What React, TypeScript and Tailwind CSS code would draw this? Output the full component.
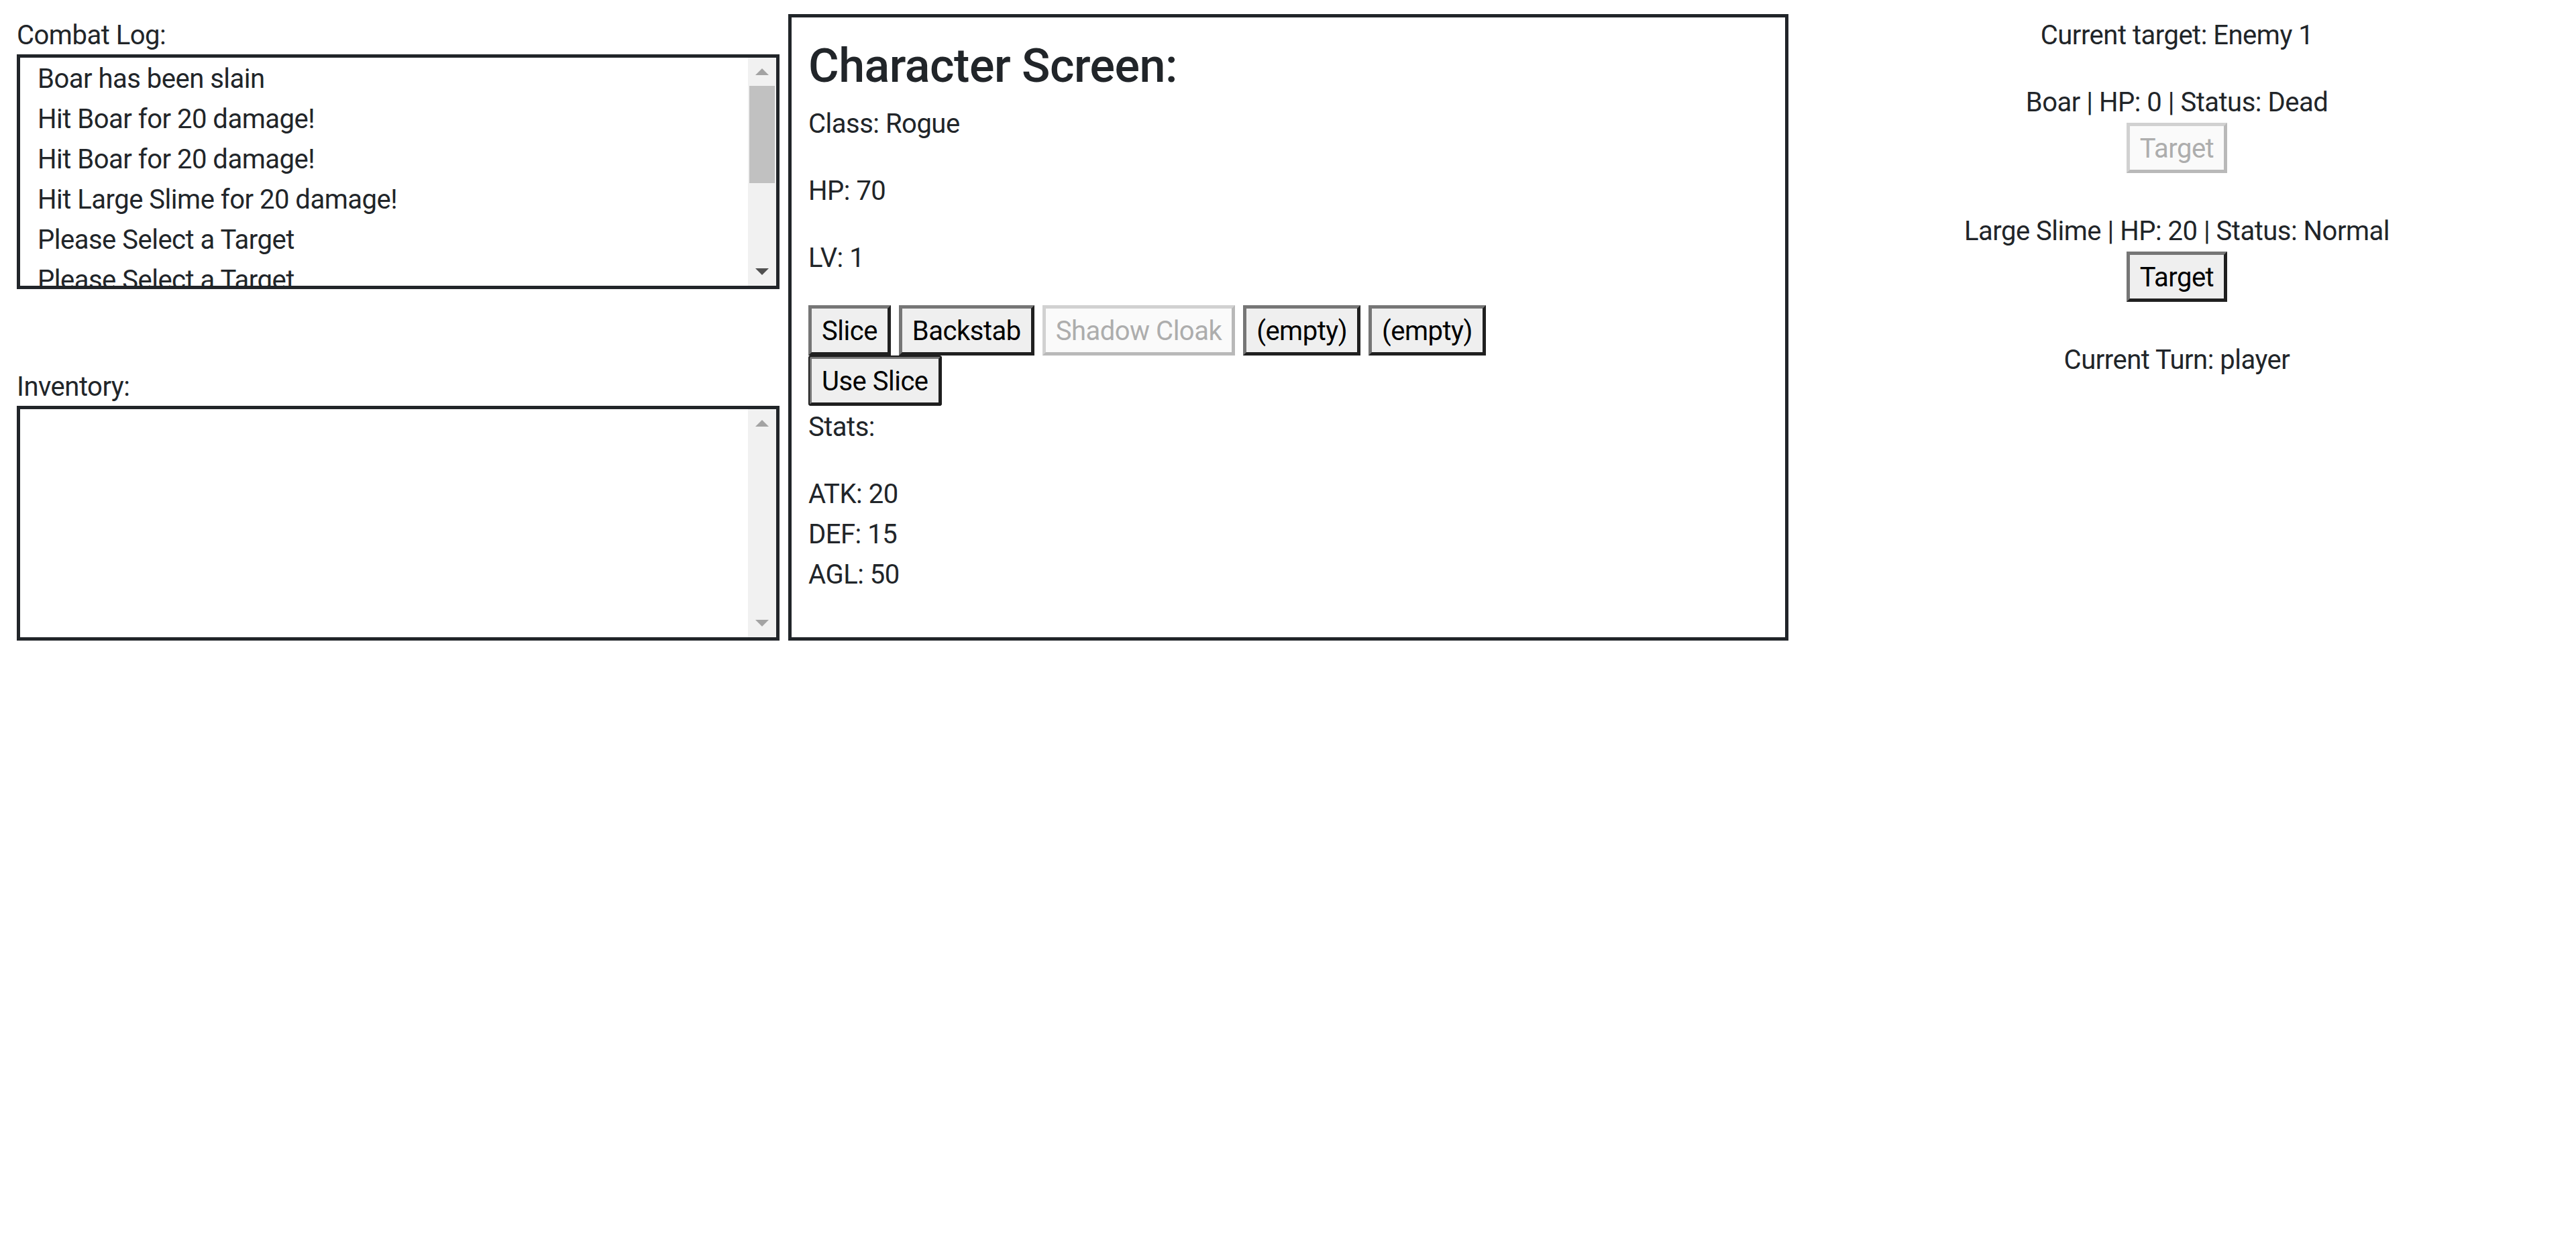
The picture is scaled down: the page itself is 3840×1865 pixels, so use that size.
import React from "react";

const combatLog = [
  "Boar has been slain",
  "Hit Boar for 20 damage!",
  "Hit Boar for 20 damage!",
  "Hit Large Slime for 20 damage!",
  "Please Select a Target",
  "Please Select a Target",
];

const enemies = [
  { name: "Boar", hp: 0, status: "Dead" },
  { name: "Large Slime", hp: 20, status: "Normal" },
];

const abilities = [
  { name: "Slice", disabled: false },
  { name: "Backstab", disabled: false },
  { name: "Shadow Cloak", disabled: true },
  { name: "(empty)", disabled: false },
  { name: "(empty)", disabled: false },
];

function GameButton({
  children,
  disabled = false,
  focused = false,
}: {
  children: React.ReactNode;
  disabled?: boolean;
  focused?: boolean;
}) {
  return (
    <button
      disabled={disabled}
      className={
        disabled
          ? "border-[5px] border-t-[#d1d1d1] border-l-[#d1d1d1] border-b-[#b9b9b9] border-r-[#b9b9b9] bg-[#fafafa] px-[15px] pt-[4px] pb-[1px] text-[40px] leading-[60px] text-[#adadad]"
          : focused
            ? "rounded-[4px] border-[5px] border-t-[#767676] border-l-[#767676] border-b-[#202020] border-r-[#202020] bg-[#efefef] px-[15px] pt-[4px] pb-[1px] text-[40px] leading-[60px] text-black outline-[2.5px] outline-[#1d1d1d] -outline-offset-[2.5px]"
            : "border-[5px] border-t-[#767676] border-l-[#767676] border-b-[#202020] border-r-[#202020] bg-[#efefef] px-[15px] pt-[4px] pb-[1px] text-[40px] leading-[60px] text-black"
      }
    >
      {children}
    </button>
  );
}

function ScrollBar({ thumb }: { thumb: boolean }) {
  return (
    <div className="flex w-[42px] shrink-0 flex-col bg-[#f1f1f1]">
      <div className="flex h-[42px] items-center justify-center">
        <svg width="20" height="10" viewBox="0 0 20 10">
          <polygon points="10,0 20,10 0,10" fill="#a3a3a3" />
        </svg>
      </div>
      <div className="flex-1 px-[2px]">
        {thumb && <div className="h-[145px] bg-[#c1c1c1]" />}
      </div>
      <div className="flex h-[42px] items-center justify-center">
        <svg width="20" height="10" viewBox="0 0 20 10">
          <polygon points="0,0 20,0 10,10" fill={thumb ? "#505050" : "#a3a3a3"} />
        </svg>
      </div>
    </div>
  );
}

export default function App() {
  return (
    <div className="flex min-h-screen items-start bg-white pl-[25px] pr-[16px] pt-[21px] font-['Roboto',sans-serif] text-[40px] leading-[60px] tracking-[-0.5px] text-[#212529]">
      {/* Left: log + inventory */}
      <div className="w-[1137px] shrink-0">
        <p className="pt-[2px] pb-[-2px] h-[60px]">Combat Log:</p>
        <div className="flex h-[350px] border-[5px] border-[#212529]">
          <ul className="flex-1 overflow-hidden pl-[26px] pt-[2px]">
            {combatLog.map((line, i) => (
              <li key={i}>{line}</li>
            ))}
          </ul>
          <ScrollBar thumb />
        </div>

        <p className="mt-[114px] h-[60px] pt-[2px]">Inventory:</p>
        <div className="flex h-[350px] border-[5px] border-[#212529]">
          <div className="flex-1" />
          <ScrollBar thumb={false} />
        </div>
      </div>

      {/* Character screen */}
      <div className="ml-[13px] w-[1491px] shrink-0 border-[5px] border-[#212529] p-[25px] pt-[27px]">
        <h2 className="mb-[20px] h-[82px] pt-[3px] text-[70px] font-medium leading-[84px]">
          Character Screen:
        </h2>
        <p className="mb-[40px]">Class: Rogue</p>
        <p className="mb-[40px]">HP: 70</p>
        <p className="mb-[40px]">LV: 1</p>
        <div className="flex flex-wrap gap-x-[12px]">
          {abilities.map((a, i) => (
            <GameButton key={i} disabled={a.disabled}>
              {a.name}
            </GameButton>
          ))}
        </div>
        <div className="flex">
          <GameButton focused>Use Slice</GameButton>
        </div>
        <p className="mb-[40px] pt-[2px]">Stats:</p>
        <div className="mb-[38px]">
          <p>ATK: 20</p>
          <p>DEF: 15</p>
          <p>AGL: 50</p>
        </div>
      </div>

      {/* Targets */}
      <div className="flex flex-1 flex-col items-center pt-[2px] text-center">
        <p className="mb-[40px]">Current target: Enemy 1</p>
        {enemies.map((e) => (
          <div key={e.name} className="mb-[57px] flex flex-col items-center">
            <p>
              {e.name} | HP: {e.hp} | Status: {e.status}
            </p>
            <GameButton disabled={e.hp <= 0}>Target</GameButton>
          </div>
        ))}
        <p>Current Turn: player</p>
      </div>
    </div>
  );
}
